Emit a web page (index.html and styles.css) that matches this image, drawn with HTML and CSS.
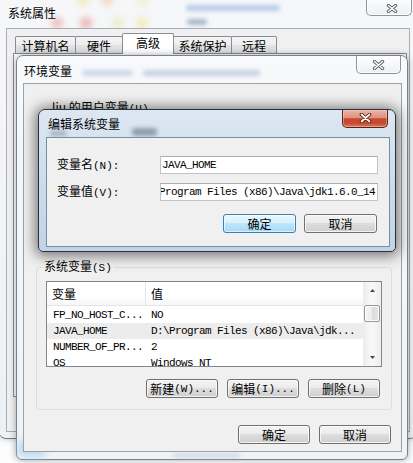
FILE: index.html
```html
<!DOCTYPE html>
<html lang="zh-CN">
<head>
<meta charset="utf-8">
<title>编辑系统变量</title>
<link rel="stylesheet" href="styles.css">
</head>
<body>
<div class="desk">

  <section class="win w1">
    <i class="blob y1"></i><i class="blob o1"></i><i class="blob y2"></i>
    <i class="blob r1"></i><i class="blob r2"></i><i class="blob g1"></i><i class="blob y3"></i>
    <i class="smear s1"></i><i class="smear s2"></i>
    <header class="titlebar"><span class="title">系统属性</span></header>
    <div class="close off">
      <svg width="12" height="9" viewBox="0 0 12 9"><path d="M2.5 1.5l7 6m0-6l-7 6" stroke="#60666c" stroke-width="3.4" stroke-linecap="round" fill="none"/><path d="M2.5 1.5l7 6m0-6l-7 6" stroke="#fff" stroke-width="1.4" stroke-linecap="round" fill="none"/></svg>
    </div>
    <div class="client">
      <nav class="tabs">
        <div class="tab t1">计算机名</div>
        <div class="tab t2">硬件</div>
        <div class="tab t3 sel">高级</div>
        <div class="tab t4">系统保护</div>
        <div class="tab t5">远程</div>
      </nav>
      <div class="tabpanel"></div>
    </div>
  </section>

  <section class="win w2">
    <i class="smear s3"></i><i class="smear s4"></i>
    <i class="blob glow1"></i><i class="smear s5"></i>
    <header class="titlebar"><span class="title">环境变量</span></header>
    <div class="close off">
      <svg width="13" height="10" viewBox="0 0 13 10"><path d="M2.5 1.5l8 7m0-7l-8 7" stroke="#60666c" stroke-width="3.4" stroke-linecap="round" fill="none"/><path d="M2.5 1.5l8 7m0-7l-8 7" stroke="#fff" stroke-width="1.4" stroke-linecap="round" fill="none"/></svg>
    </div>
    <div class="client">
      <div class="ulabel">liu 的用户变量<span class="k">(U)</span></div>
      <fieldset class="grp">
        <legend>系统变量<span class="k">(S)</span></legend>
        <div class="lv">
          <div class="lv-main">
            <div class="lv-head"><div class="hc c1">变量</div><div class="hc c2">值</div></div>
            <div class="lv-body">
              <div class="row"><span class="c1 mono">FP_NO_HOST_C...</span><span class="c2 mono">NO</span></div>
              <div class="row hl"><span class="c1 mono">JAVA_HOME</span><span class="c2 mono">D:\Program Files (x86)\Java\jdk...</span></div>
              <div class="row"><span class="c1 mono">NUMBER_OF_PR...</span><span class="c2 mono">2</span></div>
              <div class="row"><span class="c1 mono">OS</span><span class="c2 mono">Windows_NT</span></div>
            </div>
          </div>
          <div class="sb">
            <div class="sb-btn"><svg width="5" height="3" viewBox="0 0 5 3"><path d="M0 3L2.5 0L5 3Z" fill="#4a4a4a"/></svg></div>
            <div class="sb-track"><div class="sb-thumb"></div></div>
            <div class="sb-btn"><svg width="5" height="3" viewBox="0 0 5 3"><path d="M0 0L2.5 3L5 0Z" fill="#4a4a4a"/></svg></div>
          </div>
        </div>
        <div class="btnrow grp-btns">
          <div class="btn">新建<span class="k">(W)...</span></div>
          <div class="btn">编辑<span class="k">(I)...</span></div>
          <div class="btn">删除<span class="k">(L)</span></div>
        </div>
      </fieldset>
      <div class="btnrow foot">
        <div class="btn">确定</div>
        <div class="btn">取消</div>
      </div>
    </div>
  </section>

  <section class="win w3">
    <i class="smear d1"></i><i class="smear d2"></i>
    <header class="titlebar"><span class="title">编辑系统变量</span></header>
    <div class="close on">
      <svg width="13" height="10" viewBox="0 0 13 10"><path d="M2.5 1.5l8 7m0-7l-8 7" stroke="#5b1f14" stroke-width="3.6" stroke-linecap="round" fill="none"/><path d="M2.5 1.5l8 7m0-7l-8 7" stroke="#fff" stroke-width="1.7" stroke-linecap="round" fill="none"/></svg>
    </div>
    <div class="client">
      <div class="frow">
        <label class="flabel">变量名<span class="k">(N):</span></label>
        <div class="inp mono">JAVA_HOME</div>
      </div>
      <div class="frow second">
        <label class="flabel">变量值<span class="k">(V):</span></label>
        <div class="inp end mono"><span>D:\Program Files (x86)\Java\jdk1.6.0_14</span></div>
      </div>
      <div class="btnrow dbtns">
        <div class="btn def">确定</div>
        <div class="btn">取消</div>
      </div>
    </div>
  </section>

</div>
</body>
</html>
```

FILE: styles.css
```css
* { box-sizing: border-box; margin: 0; padding: 0; }
html, body { width: 413px; height: 463px; }
body {
  background: #fdfdfd;
  overflow: hidden;
  font-family: "Noto Sans CJK SC", "Noto Sans", sans-serif;
  font-size: 12px;
  line-height: 14px;
  color: #000;
}
.desk { position: relative; width: 413px; height: 463px; overflow: hidden; }

/* generic window */
.win { position: absolute; display: flex; flex-direction: column; }
.titlebar { flex: none; display: flex; align-items: center; position: relative; z-index: 1; }
.title { white-space: nowrap; }
.client { flex: 1; position: relative; z-index: 1; background: #f0f0f0; display: flex; flex-direction: column; }

.blob { position: absolute; width: 12px; height: 12px; border-radius: 50%; filter: blur(3px); opacity: .45; }
.smear { position: absolute; border-radius: 3px; filter: blur(2px); opacity: .45; }

.close { position: absolute; z-index: 2; display: flex; align-items: center; justify-content: center; border: 1px solid #8f959b; border-top: none; border-radius: 0 0 5px 5px; }
.close.off { background: linear-gradient(rgba(255,255,255,.9), rgba(236,239,242,.85)); box-shadow: inset 0 0 0 1px rgba(255,255,255,.7); }
.close.on { border-color: #5e2219; background: linear-gradient(#ecb5a8 0%, #df907d 45%, #c6472d 52%, #c54b31 78%, #dc7a5e 100%); box-shadow: inset 0 0 0 1px rgba(255,210,200,.45); }

/* 系统属性 */
.w1 { z-index: 1; left: -2px; top: -4px; width: 420px; height: 443px; padding: 0 7px 6px 7px; border: 1px solid #73787e; border-radius: 8px; background: linear-gradient(#f5f7f9, #eef1f4); box-shadow: 0 0 6px rgba(0,0,0,.25); }
.w1 > .titlebar { height: 31px; padding: 1px 0 0 2px; }
.w1 > .close { left: 367px; top: 0; width: 46px; height: 19px; padding: 5px 0 0 6px; }
.w1 > .client { border: 1px solid #a9aeb4; }
.y1 { left: 78px; top: -3px; background: #f2cf55; opacity: .35; }
.o1 { left: 102px; top: -3px; background: #f0a85a; opacity: .35; }
.y2 { left: 138px; top: -3px; background: #efe27a; opacity: .35; }
.r1 { left: 52px; top: 20px; background: #e77d7d; }
.r2 { left: 81px; top: 20px; background: #e06a6a; }
.g1 { left: 113px; top: 20px; background: #dfe58a; }
.y3 { left: 137px; top: 20px; background: #f1dc7a; }
.s1 { left: 187px; top: 8px; width: 94px; height: 6px; background: #6e9ad6; }
.s2 { left: 188px; top: 22px; width: 20px; height: 6px; background: #4a6a9a; }

.tabs { display: flex; align-items: flex-end; height: 20px; margin: 4px 0 0 8px; }
.tab { height: 17px; padding-top: 1px; margin-right: -1px; border: 1px solid #898c95; border-bottom: none; border-radius: 2px 2px 0 0; background: linear-gradient(#f5f5f5, #ededed 50%, #e3e3e3 50%, #dcdcdc); display: flex; align-items: center; justify-content: center; white-space: nowrap; }
.t1 { width: 61px; }
.t2 { width: 48px; }
.t3 { width: 52px; }
.t4 { width: 59px; }
.t5 { width: 46px; }
.tab.sel { height: 21px; margin-bottom: -1px; padding: 0 0 3px; background: #fff; position: relative; z-index: 2; }
.tabpanel { height: 344px; margin: 0 2px 0 6px; border: 1px solid #898c95; background: #fff; }

/* 环境变量 */
.w2 { z-index: 2; left: 16px; top: 55px; width: 392px; height: 405px; padding: 0 5px 7px 6px; border: 1px solid #7a8087; border-radius: 7px 7px 6px 6px; background: linear-gradient(#f7f9fb, #f0f3f6); box-shadow: 0 0 7px rgba(0,0,0,.35); }
.w2 > .titlebar { height: 27px; padding: 3px 0 0 1px; }
.w2 > .close { left: 339px; top: 0; width: 45px; height: 18px; }
.w2 > .client { border: 1px solid #99a2ab; padding: 0 9px 0 12px; }
.s3 { left: 65px; top: 14px; width: 51px; height: 6px; background: #93aed0; }
.s4 { left: 126px; top: 14px; width: 117px; height: 6px; background: #8aa3c6; }
.glow1 { left: 1px; top: 384px; width: 28px; height: 16px; background: #a9d4f0; filter: blur(4px); opacity: .9; border-radius: 6px; }
.s5 { left: 156px; top: 397px; width: 67px; height: 5px; background: #aebdd0; }

.ulabel { height: 14px; margin-top: 16px; padding-left: 16px; white-space: nowrap; }
.grp { margin-top: 145px; min-width: 0; border: 1px solid #d5dfe5; border-radius: 3px; padding: 6px 9px 11px 9px; }
.grp legend { padding: 0 2px; margin-left: -4px; line-height: 14px; }

.lv { height: 86px; border: 1px solid #828790; background: #fff; display: flex; overflow: hidden; }
.lv-main { flex: 1; min-width: 0; }
.lv-head { height: 24px; display: flex; border-bottom: 1px solid #e5e5e5; background: linear-gradient(#fff, #fff 55%, #f6f7f9); }
.hc { display: flex; align-items: center; }
.hc.c1 { width: 99px; padding-left: 5px; border-right: 1px solid #e3e6ea; }
.hc.c2 { padding-left: 5px; }
.lv-body { padding-top: 1px; }
.row { height: 16px; display: flex; align-items: center; white-space: nowrap; }
.row.hl { background: #ececec; }
.row .c1 { width: 99px; padding-left: 6px; flex: none; }
.row .c2 { padding-left: 5px; }

.sb { width: 18px; flex: none; display: flex; flex-direction: column; background: linear-gradient(90deg, #ececec, #f7f7f7 40%, #f7f7f7 60%, #ececec); }
.sb-btn { height: 17px; display: flex; align-items: center; justify-content: center; }
.sb-track { flex: 1; padding: 6px 1px 0; }
.sb-thumb { height: 17px; border: 1px solid #9b9b9b; border-radius: 2px; background: linear-gradient(90deg, #f6f6f6, #ebebeb 50%, #dcdcdc 50%, #e4e4e4); box-shadow: inset 0 0 0 1px rgba(255,255,255,.8); }

.mono { font-family: "Liberation Mono", "DejaVu Sans Mono", monospace; font-size: 11px; letter-spacing: -0.6px; }
.k { font-family: "Liberation Mono", "DejaVu Sans Mono", monospace; font-size: 11px; }

.btnrow { display: flex; justify-content: flex-end; }
.grp-btns { margin-top: 12px; gap: 9px; padding-right: 2px; }
.foot { margin-top: 15px; gap: 9px; padding-right: 1px; }
.btn { width: 72px; height: 19px; border: 1px solid #707070; border-radius: 3px; background: linear-gradient(#f3f3f3, #ececec 45%, #dddddd 50%, #d0d0d0); box-shadow: inset 0 0 0 1px rgba(255,255,255,.75); display: flex; align-items: center; justify-content: center; white-space: nowrap; }
.btn.def { border-color: #3c7fb1; background: linear-gradient(#eaf6fd, #d9f0fc 45%, #bee6fd 50%, #a7d9f5); box-shadow: inset 0 0 0 1px rgba(255,255,255,.6); }

/* 编辑系统变量 */
.w3 { z-index: 3; left: 38px; top: 109px; width: 358px; height: 143px; padding: 0 5px 4px 7px; border: 1px solid #27303b; border-radius: 7px 7px 5px 5px; background: linear-gradient(#dde7f2, #cadaeb 60%, #c2d3e7); box-shadow: 0 1px 13px 3px rgba(0,0,0,.5); }
.w3 > .titlebar { height: 27px; padding-left: 2px; }
.w3 > .close { left: 303px; top: 0; width: 46px; height: 18px; padding-bottom: 2px; }
.w3 > .client { border: 1px solid #7b8da4; padding: 18px 11px 0 10px; }
.d1 { left: 93px; top: 18px; width: 25px; height: 8px; background: #283446; opacity: .4; }
.d2 { left: 11px; top: 21px; width: 17px; height: 5px; background: #283446; opacity: .3; }

.frow { display: flex; align-items: center; height: 18px; }
.frow.second { margin-top: 9px; }
.flabel { width: 103px; flex: none; white-space: nowrap; }
.inp { flex: 1; min-width: 0; height: 18px; border: 1px solid #c0c4ca; border-top-color: #abadb3; background: #fff; display: flex; align-items: center; padding: 0 2px 0 1px; overflow: hidden; white-space: nowrap; }
.inp.end { justify-content: flex-end; }
.inp.end span { flex: none; }
.dbtns { margin-top: 13px; gap: 8px; padding-right: 1px; }
.dbtns .btn { width: 73px; }
```
